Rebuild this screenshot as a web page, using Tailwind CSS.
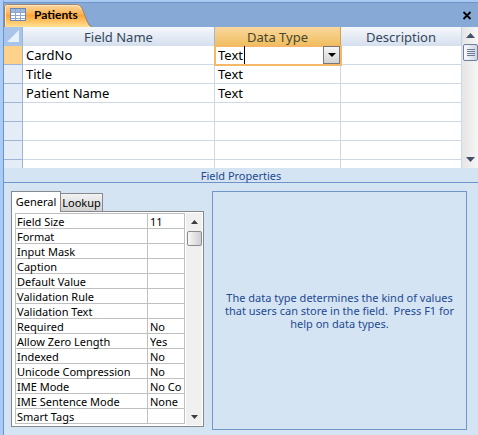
<!DOCTYPE html>
<html lang="en">
<head>
  <meta charset="UTF-8" />
  <meta name="viewport" content="width=device-width, initial-scale=1.0"/>
  <title>Patients - Table Design</title>
  <script src="https://cdn.jsdelivr.net/npm/@tailwindcss/browser@4"></script>
</head>
<body class="flex min-h-screen flex-col border-l-3 border-[#a8cbf7] bg-[#d5e4f2] font-['Noto_Sans','Open_Sans',sans-serif] text-black">

  <!-- Document tabs -->
  <header class="flex h-[27px] items-end border-t-2 border-l border-t-[#a9c9f2] border-l-[#6c94c8] bg-[#87a9d5] shadow-[inset_0_1px_#6f95c8]">
    <button type="button" class="relative flex h-[24px] w-[88px] items-center pl-[6px] text-left">
      <svg class="absolute inset-0" width="88" height="24" viewBox="0 0 88 24" aria-hidden="true">
        <defs>
          <linearGradient id="tabFill" x1="0" y1="0" x2="0" y2="1">
            <stop offset="0" stop-color="#fbd9a5"/>
            <stop offset=".4" stop-color="#fdb75c"/>
            <stop offset=".5" stop-color="#fda53c"/>
            <stop offset="1" stop-color="#ffe191"/>
          </linearGradient>
        </defs>
        <path d="M0 24V4Q0 1 3 1H73Q76 1 78 5L83 18Q85 24 88 24Z" fill="url(#tabFill)"/>
        <path d="M0.500 24V4Q0.500 1.500 3 1.500H73Q76 1.500 78 5L83 18Q85 23.500 88 23.500" fill="none" stroke="#9b8572" stroke-width="1"/>
        <path d="M1.500 22V4Q1.500 2.500 4 2.500H72Q75 2.500 77 6" fill="none" stroke="#ffe6bd"/>
      </svg>
      <svg class="relative" width="16" height="14" viewBox="0 0 16 14" aria-hidden="true">
        <rect x=".5" y=".5" width="15" height="12" fill="#fff" stroke="#6f86ad"/>
        <path d="M1 1H15V4H1Z" fill="#9db7de"/>
        <path d="M1 4.500H15M1 7.500H15M1 10.500H15M5.500 1V12M10.500 1V12" stroke="#8fa5c9"/>
      </svg>
      <span class="relative ml-[8px] text-[12px] leading-4 font-bold font-['Lato',sans-serif]">Patients</span>
    </button>
    <button type="button" class="mr-[6px] mb-[7px] ml-auto" aria-label="Close">
      <svg width="10" height="9" viewBox="0 0 10 9"><path d="M1.500 1L8.500 8M8.500 1L1.500 8" stroke="#000" stroke-width="1.800"/></svg>
    </button>
  </header>

  <!-- Field grid -->
  <section class="flex h-[141px] shrink-0 border-l border-[#6c94c8] bg-white">
    <div class="min-w-0 flex-1 overflow-hidden">
      <table class="w-full table-fixed border-separate border-spacing-0 text-[13px] leading-[18px]">
        <colgroup>
          <col class="w-[19px]"/><col/><col class="w-[126px]"/><col class="w-[121px]"/>
        </colgroup>
        <thead>
          <tr class="h-[19px] text-[#33475b]">
            <td class="border-r border-[#9fb6d8] bg-[#a9c4e9] p-0">
              <svg class="ml-[3px]" width="13" height="13" viewBox="0 0 13 13" aria-hidden="true"><path d="M12 0V12H0Z" fill="#e9f1fb"/></svg>
            </td>
            <th class="border-r border-[#9fb6d8] bg-linear-to-b from-[#f5f8fc] to-[#d5dfed] p-0 font-normal">Field Name</th>
            <th class="border-r border-[#d3a04e] bg-linear-to-b from-[#f9d89c] to-[#f0bd5c] p-0 font-normal text-[#45482c]">Data Type</th>
            <th class="border-r border-[#c8d2e0] bg-linear-to-b from-[#f5f8fc] to-[#d5dfed] p-0 font-normal">Description</th>
          </tr>
        </thead>
        <tbody id="fieldRows">
          <tr class="h-[19px]">
            <td class="border-r border-b border-[#9fb4d4] bg-[#ffd28a] p-0"></td>
            <td class="border-r border-b border-[#d0d7e5] p-0 pl-[3px]">CardNo</td>
            <td class="relative border-r border-b border-[#d0d7e5] p-0 pl-[3px]">
              <select aria-label="Data Type" class="block h-[18px] w-full appearance-none bg-transparent p-0 leading-[18px] outline-none">
                <option>Text</option><option>Memo</option><option>Number</option><option>Date/Time</option>
              </select>
              <span class="pointer-events-none absolute -inset-px -right-[2px] -bottom-[2px] border-2 border-[#f5b869]"></span>
              <span class="pointer-events-none absolute top-0 left-[29px] h-[18px] w-px bg-black"></span>
              <span class="pointer-events-none absolute top-0 right-0 flex h-[18px] w-[17px] items-center justify-center border border-[#77777b] bg-linear-to-b from-[#f6f6f6] to-[#d3d3d3]">
                <svg width="8" height="4" viewBox="0 0 8 4"><path d="M0 0H8L4 4Z"/></svg>
              </span>
            </td>
            <td class="border-r border-b border-[#d0d7e5] p-0"></td>
          </tr>
        </tbody>
      </table>
    </div>
    <div class="flex w-[16px] flex-col items-center border-l border-[#e3e6ec] bg-linear-to-r from-[#e6e6e6] to-[#f6f6f6]">
      <button type="button" class="flex h-[17px] w-full items-center justify-center" aria-label="Scroll up">
        <svg width="9" height="5" viewBox="0 0 9 5"><path d="M4.500 0L9 5H0Z" fill="#454f6b"/></svg>
      </button>
      <div class="flex h-[17px] w-[15px] flex-col items-center justify-center gap-px rounded-xs border border-[#6f7e9e] bg-linear-to-r from-[#fafbfd] to-[#cdd5e4]">
        <span class="h-px w-[8px] bg-[#6f7b94]"></span>
        <span class="h-px w-[8px] bg-[#6f7b94]"></span>
        <span class="h-px w-[8px] bg-[#6f7b94]"></span>
        <span class="h-px w-[8px] bg-[#6f7b94]"></span>
      </div>
      <button type="button" class="mt-auto flex h-[17px] w-full items-center justify-center" aria-label="Scroll down">
        <svg width="9" height="5" viewBox="0 0 9 5"><path d="M0 0H9L4.500 5Z" fill="#454f6b"/></svg>
      </button>
    </div>
  </section>

  <h2 class="h-[15px] border-b border-l border-[#6c94c8] text-center text-[11px] leading-4 text-[#1e4a93]">Field Properties</h2>

  <!-- Field properties -->
  <main class="flex flex-1 gap-2 border-l border-[#6c94c8] pt-[8px] pr-[11px] pb-[5px] pl-[7px]">
    <section class="mb-[3px] flex w-[193px] shrink-0 flex-col text-[11px] leading-4">
      <div class="flex h-[20px] items-end pt-px">
        <button type="button" class="relative -mb-px h-[21px] w-[50px] border border-b-0 border-[#85888c] bg-white">General</button>
        <button type="button" class="h-[18px] w-[42px] border border-b-0 border-l-0 border-[#85888c] bg-linear-to-b from-[#f3f3f3] to-[#d2d2d2]">Lookup</button>
      </div>
      <div class="flex flex-1 items-start gap-px border border-[#85888c] bg-white py-px pr-px pl-[3px]">
        <table class="min-w-0 flex-1 table-fixed border-collapse">
          <colgroup><col class="w-[132px]"/><col class="w-[37px]"/></colgroup>
          <tbody id="propertyRows"></tbody>
        </table>
        <div class="flex w-[16px] flex-col items-center self-stretch bg-[#f0f0f0]">
          <button type="button" class="flex h-[18px] w-full items-center justify-center" aria-label="Scroll up">
            <svg width="7" height="4" viewBox="0 0 7 4"><path d="M3.500 0L7 4H0Z" fill="#3c3c3c"/></svg>
          </button>
          <div class="h-[15px] w-[15px] rounded-xs border border-[#8c8c8c] bg-linear-to-r from-[#f8f8f8] to-[#cfcfd2]"></div>
          <button type="button" class="mt-auto flex h-[17px] w-full items-center justify-center" aria-label="Scroll down">
            <svg width="7" height="4" viewBox="0 0 7 4"><path d="M0 0H7L3.500 4Z" fill="#3c3c3c"/></svg>
          </button>
        </div>
      </div>
    </section>

    <aside class="flex flex-1 items-center justify-center border border-[#7396c8] px-[8px] text-center text-[11px] leading-[13px] text-[#1e4a93]">
      <p>The data type determines the kind of values that users can store in the field.&nbsp; Press F1 for help on data types.</p>
    </aside>
  </main>

  <script>
    const fields = [
      ['Title', 'Text'],
      ['Patient Name', 'Text'],
      ['', ''], ['', ''], ['', ''], ['', '']
    ];

    const properties = [
      ['Field Size', '11'],
      ['Format', ''],
      ['Input Mask', ''],
      ['Caption', ''],
      ['Default Value', ''],
      ['Validation Rule', ''],
      ['Validation Text', ''],
      ['Required', 'No'],
      ['Allow Zero Length', 'Yes'],
      ['Indexed', 'No'],
      ['Unicode Compression', 'No'],
      ['IME Mode', 'No Control'],
      ['IME Sentence Mode', 'None'],
      ['Smart Tags', '']
    ];

    const fieldRows = document.getElementById('fieldRows');
    fields.forEach(([name, type]) => {
      const tr = document.createElement('tr');
      tr.className = 'h-[19px]';
      tr.innerHTML = `
        <td class="border-r border-b border-[#9fb4d4] bg-[#e4ecf7] p-0"></td>
        <td class="border-r border-b border-[#d0d7e5] p-0 pl-[3px]">${name}</td>
        <td class="border-r border-b border-[#d0d7e5] p-0 pl-[3px]">${type}</td>
        <td class="border-r border-b border-[#d0d7e5] p-0"></td>
      `;
      fieldRows.appendChild(tr);
    });

    const propertyRows = document.getElementById('propertyRows');
    properties.forEach(([name, value], i) => {
      const tr = document.createElement('tr');
      tr.className = 'h-[15px]';
      tr.innerHTML = `
        <th class="border border-[#c0c0c0] p-0 pl-px text-left font-normal whitespace-nowrap"><label class="block h-[14px]" for="prop${i}">${name}</label></th>
        <td class="border border-[#c0c0c0] p-0 pl-[2px]"><input id="prop${i}" type="text" value="${value}" class="block h-[14px] w-[32px] p-0 pt-px leading-[13px] outline-none"/></td>
      `;
      propertyRows.appendChild(tr);
    });
  </script>
</body>
</html>
